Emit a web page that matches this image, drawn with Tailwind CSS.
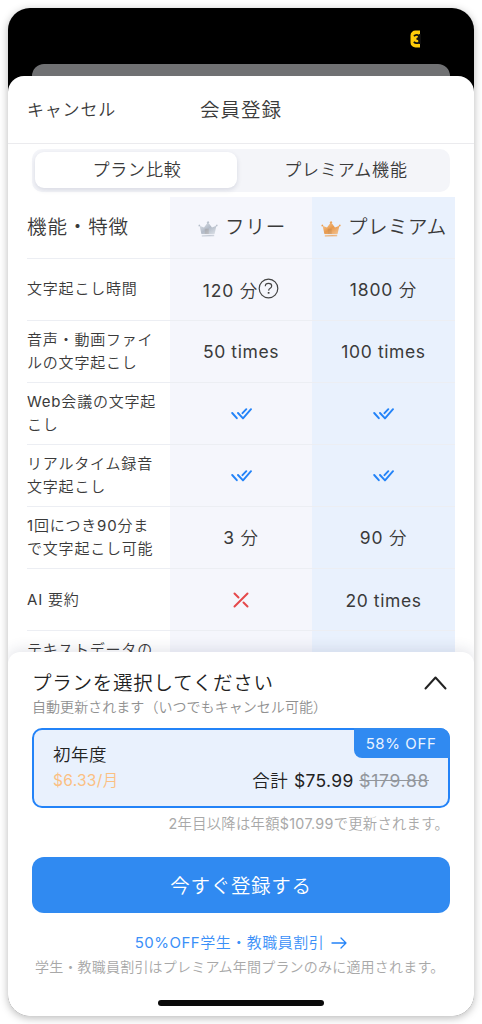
<!DOCTYPE html>
<html lang="ja">
<head>
<meta charset="utf-8">
<title>会員登録</title>
<script src="https://cdn.jsdelivr.net/npm/@tailwindcss/browser@4"></script>
</head>
<body class="w-[482px] h-[1024px] overflow-hidden bg-white pt-2 pl-2 font-[350] font-['Inter','Noto_Sans_CJK_JP',sans-serif] text-[#3a3a3a]">
<svg class="absolute h-0 w-0">
  <symbol id="crown" viewBox="0 0 20 16">
    <path d="M1.600 4.800 6 6.600 9.400 2h1.200L14 6.600l4.400-1.800L16.600 13H3.400z"/>
    <path d="M6.800 7.800h4v5.200h-4z" fill="#7a5a40" opacity=".14"/>
    <circle cx="1.300" cy="4.600" r="1"/><circle cx="10" cy="1.500" r="1.200"/><circle cx="18.700" cy="4.600" r="1"/>
    <path d="M3.800 13.800h12.400v1.800H3.800z" opacity=".75"/>
  </symbol>
  <symbol id="checks" viewBox="0 0 21 12">
    <path d="M1.200 5l4.600 5.200M7 5l5 5.400L20 1.200M11.500 5.200l3.800-4" fill="none" stroke="#2383f8" stroke-width="1.900" stroke-linecap="round" stroke-linejoin="round"/>
  </symbol>
  <linearGradient id="silver" x1="0" x2="1" y2="1"><stop stop-color="#dfe4ea"/><stop offset=".5" stop-color="#b3bbc8"/><stop offset="1" stop-color="#dde2e8"/></linearGradient>
  <linearGradient id="gold" x1="0" x2="1" y2="1"><stop stop-color="#f8cf9c"/><stop offset=".5" stop-color="#e89a4e"/><stop offset="1" stop-color="#f4c595"/></linearGradient>
</svg>
<main class="flex w-[466px] h-[1008px] flex-col overflow-hidden rounded-[22px] bg-black shadow-[0_2px_8px_rgba(0,0,0,0.28)]">
  <div class="flex h-[56px] shrink-0 justify-end pt-[22px] pr-[53px]">
    <svg class="w-[12px] h-[18px]" viewBox="0 0 12 18"><path d="M11 .5v17H6.500a5 5 0 0 1-5-5v-7a5 5 0 0 1 5-5z" fill="#fecb09"/><path d="M5 6.300Q6 4.900 7.700 4.900q2.200 0 2.200 1.900T7.500 8.900q2.800 0 2.800 2.200t-2.600 2.100q-1.800 0-2.800-1.500M11 4v10" fill="none" stroke="#111" stroke-width="1.800"/></svg>
  </div>
  <div class="mx-6 h-3 shrink-0 rounded-t-[12px] bg-[#707173]"></div>
  <div class="flex h-[940px] shrink-0 flex-col rounded-t-[16px] bg-white">
    <header class="grid h-[68px] shrink-0 grid-cols-[1fr_auto_1fr] items-center border-b border-[#ebebee] pt-[2px] pl-[19px] pr-[19px]">
      <span class="text-[17px] tracking-[0.800px]">キャンセル</span>
      <h1 class="text-[19.500px] tracking-[1px]">会員登録</h1>
      <span></span>
    </header>
    <nav class="mx-6 mt-[5px] grid h-[43px] shrink-0 grid-cols-[202px_1fr] rounded-[10px] bg-[#f4f5f9] pt-[3px] pl-[3px] text-[17px] tracking-[0.800px]">
      <div class="flex h-9 items-center justify-center rounded-[9px] bg-white pt-px pl-[2px] shadow-[0_2px_5px_rgba(30,40,80,0.13)]">プラン比較</div>
      <div class="flex h-9 items-center justify-center pt-px pl-[5px]">プレミアム機能</div>
    </nav>
    <section class="mt-[5px] ml-[19px] h-[455px] w-[428px] shrink-0 overflow-hidden">
      <div class="grid h-[496px] grid-cols-[143px_142px_143px] grid-rows-[repeat(8,62px)] bg-[linear-gradient(90deg,#fff_143px,#f5f6fc_143px,#f5f6fc_285px,#e9f1fd_285px)] text-[15px] leading-[22.500px] tracking-[0.800px] *:flex *:items-center *:border-b *:border-[#eceef3]">
        <div class="text-[19.500px] tracking-[0.900px]">機能・特徴</div>
        <div class="gap-[7px] pl-7 text-[19.500px] tracking-[0.900px]"><svg class="mt-[2px] h-4 w-5 shrink-0" fill="url(#silver)"><use href="#crown"/></svg>フリー</div>
        <div class="gap-[7px] pl-[9px] text-[19.500px] tracking-[0.500px] whitespace-nowrap"><svg class="mt-[2px] h-4 w-5 shrink-0" fill="url(#gold)"><use href="#crown"/></svg>プレミアム</div>

        <div>文字起こし時間</div>
        <div class="justify-center text-[17.500px]"><span class="pt-[3px]"><span class="font-normal">120</span> 分</span><svg class="mb-[3px] h-[21px] w-[21px]" viewBox="0 0 21 21" fill="none" stroke="#444" stroke-width="1.200"><circle cx="10.500" cy="10.500" r="9.300"/><path d="M7.300 8.300q0-3 3.200-3t3.200 2.700q0 1.400-1.500 2.300t-1.600 2.300"/><path d="M10.600 14v1.700" stroke-width="1.700"/></svg></div>
        <div class="justify-center text-[17.500px]"><span class="pt-px"><span class="font-normal">1800</span> 分</span></div>

        <div>音声・動画ファイ<br>ルの文字起こし</div>
        <div class="justify-center text-[17.500px] tracking-[0.600px] font-normal"><span class="pt-[2px]">50 times</span></div>
        <div class="justify-center text-[17.500px] tracking-[0.600px] font-normal"><span class="pt-[2px]">100 times</span></div>

        <div><span><span class="font-normal">Web</span>会議の文字起<br>こし</span></div>
        <div class="justify-center"><svg class="h-3 w-[21px]"><use href="#checks"/></svg></div>
        <div class="justify-center"><svg class="h-3 w-[21px]"><use href="#checks"/></svg></div>

        <div>リアルタイム録音<br>文字起こし</div>
        <div class="justify-center"><svg class="h-3 w-[21px]"><use href="#checks"/></svg></div>
        <div class="justify-center"><svg class="h-3 w-[21px]"><use href="#checks"/></svg></div>

        <div><span><span class="font-normal">1</span>回につき<span class="font-normal">90</span>分ま<br>で文字起こし可能</span></div>
        <div class="justify-center text-[17.500px]"><span class="pt-[2px]"><span class="font-normal">3</span> 分</span></div>
        <div class="justify-center text-[17.500px]"><span class="pt-[2px]"><span class="font-normal">90</span> 分</span></div>

        <div><span class="pt-[2px]"><span class="font-normal">AI</span> 要約</span></div>
        <div class="justify-center"><svg class="h-4 w-4" viewBox="0 0 16 16" fill="none" stroke="#e5484a" stroke-width="2" stroke-linecap="round"><path d="M1.500 14.500l13-13M1.500 1.500l4 4M10.500 10.500l4 4"/></svg></div>
        <div class="justify-center text-[17.500px] tracking-[0.600px] font-normal"><span class="pt-[3px]">20 times</span></div>

        <div class="pb-[22px]">テキストデータの</div>
        <div></div>
        <div></div>
      </div>
    </section>
    <section class="relative flex h-[364px] shrink-0 flex-col rounded-t-[12px] bg-white px-6 pt-[17px] shadow-[0_-3px_14px_rgba(40,50,90,0.12)]">
      <div class="flex h-[53px] shrink-0 items-start justify-between">
        <div>
          <h2 class="h-[27px] text-[19.500px] leading-[28px] tracking-[0.750px] text-[#222]">プランを選択してください</h2>
          <p class="text-[14px] leading-[22px] tracking-[0.050px] text-[#909090]">自動更新されます（いつでもキャンセル可能）</p>
        </div>
        <svg class="mt-[7px] mr-[3px] h-[14px] w-[23px]" viewBox="0 0 23 14" fill="none" stroke="#222" stroke-width="2" stroke-linecap="round" stroke-linejoin="round"><path d="M1.500 12.500l10-11 10 11"/></svg>
      </div>
      <div class="relative mt-[6px] flex h-20 shrink-0 flex-col justify-between rounded-[10px] border-2 border-[#2383f8] bg-[#e9f1fd] pt-[12px] pr-[19px] pb-[13px] pl-[19px]">
        <span class="text-[17.500px] leading-[26px] tracking-[0.500px] text-[#222]">初年度</span>
        <div class="flex h-[26px] items-center justify-between">
          <span class="text-[15.500px] leading-[24px] tracking-[0.300px] text-[#fbc083]"><span class="font-normal">$6.33/</span>月</span>
          <span class="text-[17.500px] leading-[26px] tracking-[0.600px] text-[#222]">合計 <span class="font-normal tracking-[0.350px]">$75.99</span> <span class="font-normal tracking-[0.700px] text-[#92969c] line-through">$179.88</span></span>
        </div>
        <div class="absolute -top-0.5 -right-0.5 flex h-[30px] w-24 items-center justify-center rounded-tr-[10px] rounded-bl-[8px] bg-[#308af1] pt-[2px] pr-[2px] text-[15px] font-normal tracking-[0.600px] text-[#eaf3ff]">58% OFF</div>
      </div>
      <p class="mt-[5px] h-[22px] shrink-0 pr-[1px] text-right text-[14.300px] leading-[22px] tracking-[0.300px] whitespace-nowrap text-[#a8a8a8]"><span class="font-normal">2</span>年目以降は年額<span class="font-normal">$107.99</span>で更新されます。</p>
      <button class="mt-[22px] h-14 shrink-0 rounded-[12px] bg-[#308af1] pt-[3px] text-[19.500px] tracking-[0.700px] text-white">今すぐ登録する</button>
      <div class="mt-[18px] flex h-6 shrink-0 items-center justify-center gap-[7px] text-[15px] tracking-[0.500px] text-[#3a8ff8]"><span><span class="font-normal">50%OFF</span>学生・教職員割引</span><svg class="h-3 w-4" viewBox="0 0 16 12" fill="none" stroke="#2383f8" stroke-width="1.300" stroke-linecap="round" stroke-linejoin="round"><path d="M1 6h14M10 1l5 5-5 5"/></svg></div>
      <p class="h-[22px] shrink-0 pl-[3px] text-[14px] leading-[23px] tracking-[0.200px] whitespace-nowrap text-[#a8a8a8]">学生・教職員割引はプレミアム年間プランのみに適用されます。</p>
      <div class="mt-[23px] ml-[126px] h-[6px] w-[166px] shrink-0 rounded-full bg-[#0a0a0a]"></div>
    </section>
  </div>
</main>
</body>
</html>
